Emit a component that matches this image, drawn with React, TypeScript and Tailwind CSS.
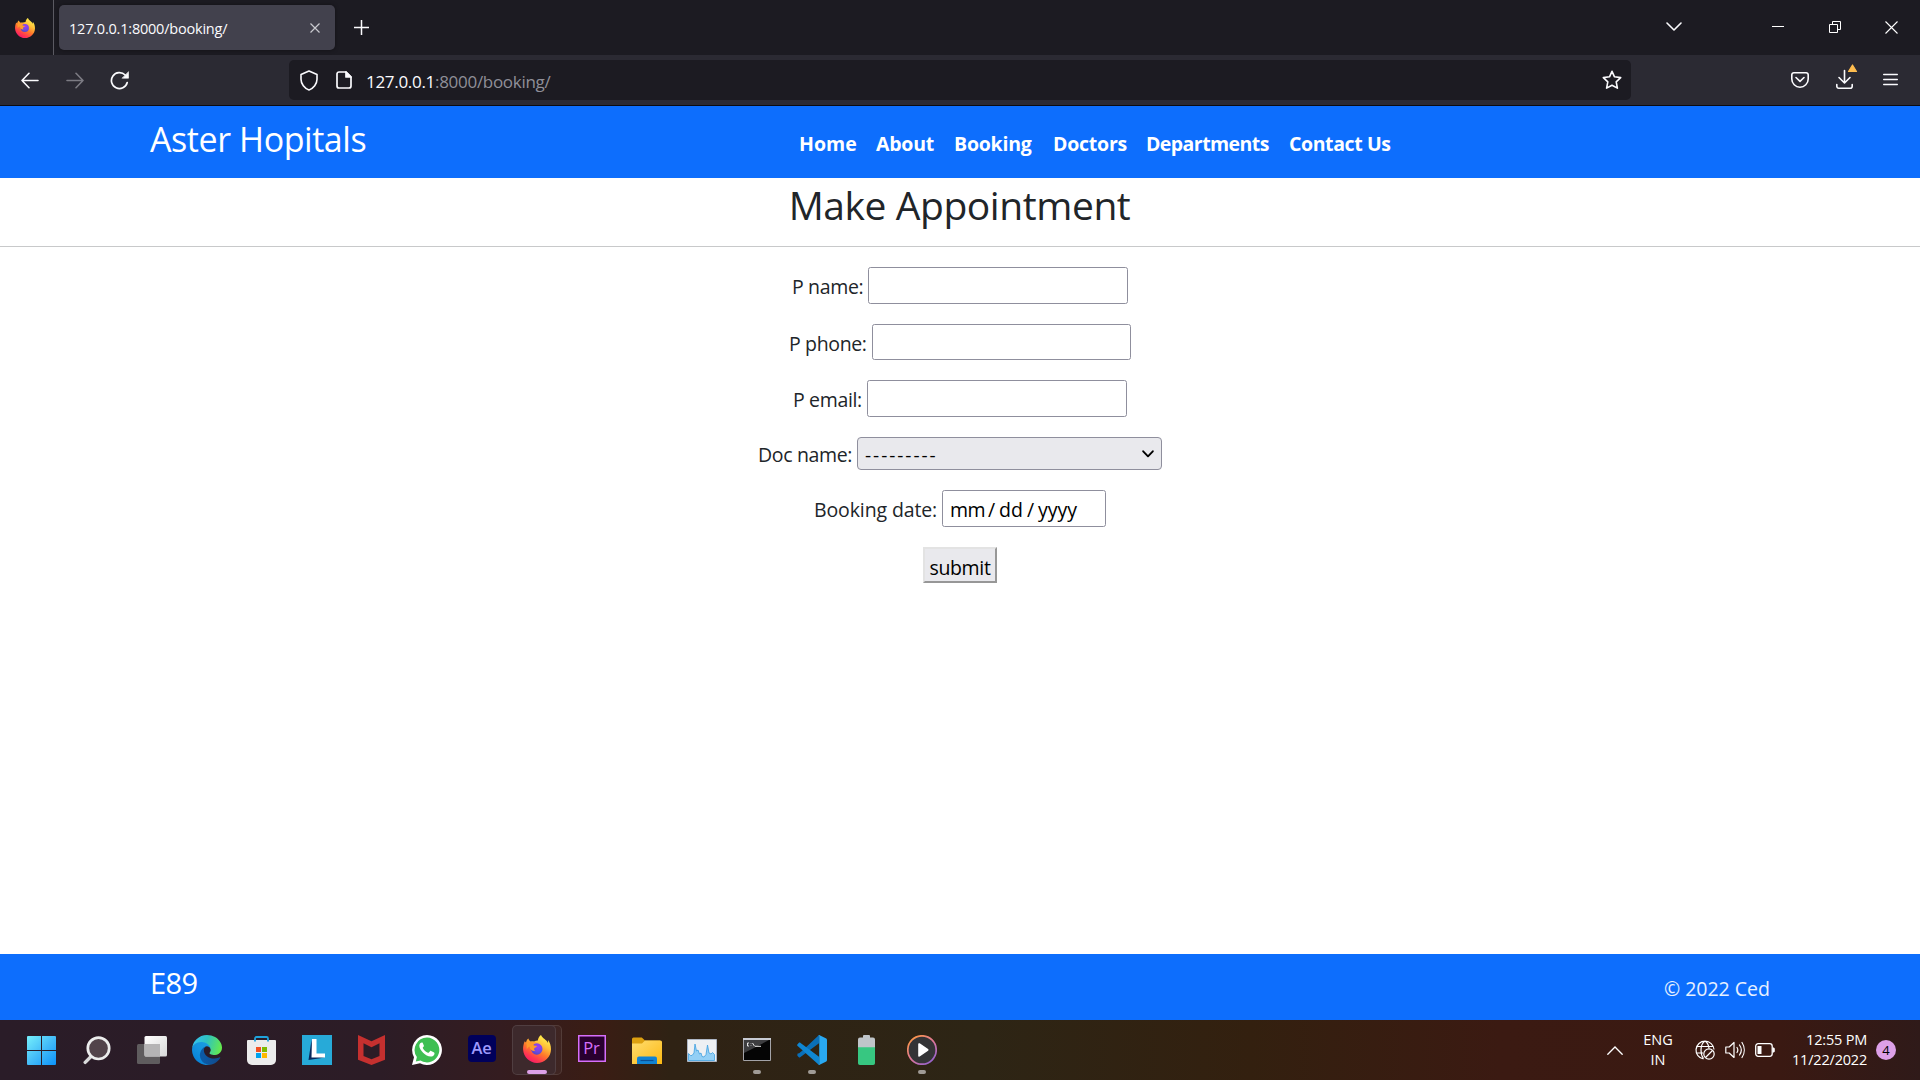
import type { ReactNode } from 'react';

function FirefoxLogo({ size, id }: { size: number; id: string }) {
  return (
    <svg width={size} height={size} viewBox="0 0 28 28">
      <defs>
        <linearGradient id={`${id}-body`} x1="0.8" y1="0.05" x2="0.25" y2="1">
          <stop offset="0" stopColor="#fff44f" />
          <stop offset="0.3" stopColor="#ffc038" />
          <stop offset="0.55" stopColor="#ff7a2a" />
          <stop offset="0.8" stopColor="#ff3750" />
          <stop offset="1" stopColor="#f5156c" />
        </linearGradient>
        <radialGradient id={`${id}-globe`} cx="0.6" cy="0.3" r="0.8">
          <stop offset="0" stopColor="#a23cf5" />
          <stop offset="0.6" stopColor="#6a4be0" />
          <stop offset="1" stopColor="#4a46b8" />
        </radialGradient>
      </defs>
      <path
        fill={`url(#${id}-body)`}
        d="M18 0c-1.8 1.300-3 3.400-3.200 5.600-1.300 0-2.600.3-3.800.8-1-.3-2.200-.4-3.300.1C6.600 5.800 5.700 4.800 5.400 3.500 4.100 4.500 3.200 6 3 7.600L1.700 6.200C.5 8.900 0 12 .1 14.600.5 22 6.500 28 14 28s14-6 14-13.800c0-3.600-1.200-7-3.100-9.100.2 1 .2 2 .1 2.900C23.600 4.500 19.500 3.600 18 0z"
      />
      <circle cx="13.8" cy="14" r="5.700" fill={`url(#${id}-globe)`} />
      <path
        fill="#ff9a2c"
        d="M3.500 7.800c2-1.400 4.600-1.200 6.100-.2 1.300-.4 2.600-.4 3.300-.1-1.700.9-2.400 1.900-2.600 2.600.7.9 3 .7 3.700 1-.1 1-1.900 1.700-2.700 2.200-.3.9-.1 1.900.8 2.700-2.900.4-5.200-1.600-5.500-4.600-1.500.5-2.700 2-2.800 3.500z"
      />
    </svg>
  );
}

function EdgeLogo() {
  return (
    <svg width="30" height="30" viewBox="0 0 256 256">
      <defs>
        <linearGradient id="edge-dark" x1="0.2" y1="0.5" x2="1" y2="0.5">
          <stop offset="0" stopColor="#0c59a4" />
          <stop offset="1" stopColor="#114a8b" />
        </linearGradient>
        <linearGradient id="edge-blue" x1="0.9" y1="0.1" x2="0.3" y2="1">
          <stop offset="0" stopColor="#1b9de2" />
          <stop offset="0.4" stopColor="#1595df" />
          <stop offset="1" stopColor="#0680d7" />
        </linearGradient>
        <linearGradient id="edge-green" x1="0" y1="0.4" x2="1" y2="0.6">
          <stop offset="0" stopColor="#35c1f1" />
          <stop offset="0.45" stopColor="#2fc2c0" />
          <stop offset="1" stopColor="#66eb4a" />
        </linearGradient>
      </defs>
      <path fill="url(#edge-dark)" d="M235.680 190.380a93.730 93.730 0 0 1-10.540 4.710 101.870 101.870 0 0 1-35.900 6.460c-47.320 0-88.540-32.550-88.540-74.320A31.480 31.480 0 0 1 117.130 100c-42.800 1.800-53.800 46.400-53.800 72.530 0 73.880 68.090 81.370 82.760 81.370 7.910 0 19.840-2.300 27-4.560l1.310-.44a128.340 128.340 0 0 0 66.600-52.800 4 4 0 0 0-5.320-5.720z" />
      <path fill="url(#edge-blue)" d="M105.730 241.420A79.200 79.200 0 0 1 83 220.100a80.720 80.720 0 0 1 29.530-120c3.120-1.470 8.450-4.130 15.540-4a32.350 32.350 0 0 1 25.690 13 31.880 31.880 0 0 1 6.360 18.660c0-.21 24.460-79.600-80-79.600-43.900 0-80 41.660-80 78.210a130.150 130.150 0 0 0 12.110 56 128 128 0 0 0 156.380 67.110 75.550 75.550 0 0 1-62.780-8z" />
      <path fill="url(#edge-green)" d="M152.330 148.860c-.81 1.050-3.300 2.500-3.300 5.660 0 2.610 1.700 5.120 4.720 7.230 14.380 10 41.490 8.680 41.560 8.680a59.560 59.560 0 0 0 30.270-8.350A61.380 61.380 0 0 0 256 109.040c.26-22.410-8-37.310-11.340-43.910C223.460 23.650 177.700 0 128 0A128 128 0 0 0 0 126.200c.48-36.540 36.800-66.050 80-66.050 3.500 0 23.460.34 42 10.070 16.340 8.580 24.900 18.940 30.850 29.210 6.180 10.670 7.280 24.150 7.280 29.520s-2.740 13.330-7.800 19.910z" />
    </svg>
  );
}

function WindowsLogo() {
  return (
    <svg width="29" height="29" viewBox="0 0 29 29">
      <defs>
        <linearGradient id="win" x1="0" y1="0" x2="29" y2="29" gradientUnits="userSpaceOnUse">
          <stop offset="0" stopColor="#76f0fb" />
          <stop offset="0.5" stopColor="#45bdf8" />
          <stop offset="1" stopColor="#0c92fb" />
        </linearGradient>
      </defs>
      <path fill="url(#win)" d="M1 0h13v14H0V1a1 1 0 0 1 1-1zM15 0h13a1 1 0 0 1 1 1v13H15zM0 15h14v14H1a1 1 0 0 1-1-1zM15 15h14v13a1 1 0 0 1-1 1H15z" />
    </svg>
  );
}

function SearchLogo() {
  return (
    <svg width="28" height="29" viewBox="0 0 28 29">
      <path d="M8.800 19.800 2.200 26.400" stroke="#d9dadb" strokeWidth="3.400" strokeLinecap="round" />
      <circle cx="15.500" cy="12.300" r="10.700" fill="#52444b" stroke="#eceded" strokeWidth="2.700" />
    </svg>
  );
}

function TaskViewLogo() {
  return (
    <svg width="30" height="28" viewBox="0 0 30 28">
      <defs>
        <linearGradient id="tv" x1="0" y1="0" x2="1" y2="1">
          <stop offset="0" stopColor="#ffffff" />
          <stop offset="1" stopColor="#d8d8d8" />
        </linearGradient>
      </defs>
      <rect x="0" y="8" width="23" height="20" rx="1.500" fill="#5f5c5e" />
      <rect x="7.500" y="0" width="22.500" height="20.500" rx="1.500" fill="url(#tv)" />
      <path d="M7.500 8H23v12.500H9a1.500 1.500 0 0 1-1.500-1.500z" fill="#b5b4b5" />
    </svg>
  );
}

function StoreLogo() {
  return (
    <svg width="29" height="30" viewBox="0 0 29 30">
      <path d="M0 6a1 1 0 0 1 1-1h27a1 1 0 0 1 1 1v19a5 5 0 0 1-5 5H5a5 5 0 0 1-5-5z" fill="#ececec" />
      <path d="M8 6.500V3.500A1.500 1.500 0 0 1 9.500 2h10A1.500 1.500 0 0 1 21 3.500v3" fill="none" stroke="#1fa3dc" strokeWidth="1.800" />
      <path d="M9 12h5v5H9z" fill="#f25022" />
      <path d="M15 12h5v5h-5z" fill="#7fba00" />
      <path d="M9 18h5v5H9z" fill="#00a4ef" />
      <path d="M15 18h5v5h-5z" fill="#ffb900" />
    </svg>
  );
}

function LensLogo() {
  return (
    <svg width="30" height="30" viewBox="0 0 30 30">
      <path d="M0 0h30v30H0z" fill="#27aad8" />
      <path d="M9.500 5 6.500 25l16.500-2.500-12-1z" fill="#06285c" />
      <path d="M10 4h4.500v14.500h8.500v4H9.500z" fill="#fff" />
    </svg>
  );
}

function McAfeeLogo() {
  return (
    <svg width="27" height="30" viewBox="0 0 27 30">
      <path fill="#c5302f" d="M0 0l13.500 6.300L27 0v24.800L13.500 30 0 24.800zM5.500 8.300v12.700l8 3.300 8-3.300V8.300l-8 4z" fillRule="evenodd" />
    </svg>
  );
}

function WhatsAppLogo() {
  return (
    <svg width="30" height="30" viewBox="0 0 30 30">
      <path d="M15 0a15 15 0 1 1-7 28.300L0 30l2-7.700A15 15 0 0 1 15 0z" fill="#fff" />
      <path d="M15 2.600a12.400 12.400 0 1 1-6.500 23L3.800 26.500l1.100-4.400A12.400 12.400 0 0 1 15 2.600z" fill="#3ebf52" />
      <path
        d="M10.900 8.200c-.3-.7-.7-.7-1-.7-1 0-2.600 1.200-2.600 3.300 0 4.300 6.500 10.800 11.200 10.800 2.300 0 4-1.300 4-3.200 0-.5 0-.8-.4-1l-3-1.500c-.4-.2-.8-.1-1.100.3l-1.100 1.400c-.2.3-.6.3-1 .1-2-.8-3.900-2.500-5-4.500-.2-.4-.1-.6.100-.9.400-.4 1.100-1 .9-1.600z"
        fill="#fff"
      />
    </svg>
  );
}

function AfterEffectsLogo() {
  return (
    <div className="flex h-[27px] w-[28px] items-center justify-center rounded-[4px] bg-[#00005b] pb-px text-[16.500px] leading-none font-semibold tracking-[-0.3px] text-[#9f9bfd]">
      Ae
    </div>
  );
}

function PremiereLogo() {
  return (
    <div className="flex h-[27px] w-[28px] items-center justify-center border border-[#d66efb] bg-[#29002f] text-[16.500px] leading-none font-medium tracking-[-0.2px] text-[#d66efb] shadow-[inset_0_0_0_0.5px_#d66efb]">
      Pr
    </div>
  );
}

function FolderLogo() {
  return (
    <svg width="30" height="27" viewBox="0 0 30 27">
      <defs>
        <linearGradient id="fold" x1="0" y1="0" x2="1" y2="1">
          <stop offset="0" stopColor="#ffdd70" />
          <stop offset="1" stopColor="#fdb913" />
        </linearGradient>
      </defs>
      <path d="M0 2a1.500 1.500 0 0 1 1.500-1.500h8.300l3.200 3H28V9H0z" fill="#dda010" />
      <path d="M0 6.500h10l3-3h15.500A1.500 1.500 0 0 1 30 5v22H0z" fill="url(#fold)" />
      <path d="M5 27v-5.500a2 2 0 0 1 2-2h16a2 2 0 0 1 2 2V27z" fill="#1283d3" />
      <path d="M8.500 23.500h13" stroke="#0a4f96" strokeWidth="1.200" />
    </svg>
  );
}

function MonitorLogo() {
  return (
    <svg width="30" height="23" viewBox="0 0 30 23">
      <path d="M.5.500h29v22H.5z" fill="#eef0f3" stroke="#aeb6c4" />
      <path
        d="M1.500 21.500v-7l2 2 1.500 0 2-2.500 1-9 1.500 7 1.500-1 1.500 4 1.500-1 1 3.500 2 .5 2-2.500 1.500-9.500 1.500 8 2 1 1.500-1.500 2 2v6z"
        fill="#93cff5"
        stroke="#3f9fdf"
        strokeWidth="0.800"
      />
    </svg>
  );
}

function TerminalLogo() {
  return (
    <svg width="28" height="23" viewBox="0 0 28 23">
      <path d="M.5.500h27v22H.5z" fill="#050505" stroke="#a3a3a8" />
      <path d="M0 0h28v2H0z" fill="#c8cbd4" />
      <path d="M1 2h25L9 11 1 15z" fill="#3d3d3f" />
      <path d="M6 5H4.500v3H6M8 5.500v.5M8 7.500V8M9.500 5l2 3.200M12 8.300h6" fill="none" stroke="#e6e6e6" />
    </svg>
  );
}

function CodeLogo() {
  return (
    <svg width="30" height="30" viewBox="0 0 30 30">
      <path d="M22 0 5.500 15.500 1.800 18.600a1 1 0 0 0-1.300.1L.3 20.500l1.500 1.800c.5.400 1 .3 1.400 0L22 8.200z" fill="#0a6fb8" />
      <path d="M22 30 .4 10.800a1 1 0 0 1 0-1.400l1.500-1.600c.4-.4 1-.3 1.400 0L22 21.800z" fill="#0f86d2" />
      <path d="M21 29.600c.4.400 1 .5 1.600.2l6.200-3c.7-.3 1.200-1 1.200-1.700V4.900c0-.7-.5-1.400-1.200-1.700l-6.200-3C22 0 21.400 0 21 .5c.7-.4 1.200.1 1.200 1v27c0 .9-.5 1.500-1.200 1.100z" fill="#29a9f2" />
    </svg>
  );
}

function BatteryAppLogo() {
  return (
    <svg width="17" height="30" viewBox="0 0 17 30">
      <path d="M5 1a1 1 0 0 1 1-1h5a1 1 0 0 1 1 1v1.500h3A2 2 0 0 1 17 4.500V13H0V4.500a2 2 0 0 1 2-2h3z" fill="#bfc5c9" />
      <path d="M0 12.200h17v16a1.800 1.800 0 0 1-1.800 1.800H1.800A1.800 1.800 0 0 1 0 28.200z" fill="#37c781" />
    </svg>
  );
}

function MediaLogo() {
  return (
    <svg width="30" height="30" viewBox="0 0 30 30">
      <defs>
        <linearGradient id="ring" x1="0.1" y1="0" x2="0.9" y2="1">
          <stop offset="0" stopColor="#ff9a3c" />
          <stop offset="0.5" stopColor="#e0789a" />
          <stop offset="1" stopColor="#8a5fd6" />
        </linearGradient>
      </defs>
      <circle cx="15" cy="15" r="14.200" fill="#343436" stroke="url(#ring)" strokeWidth="1.700" />
      <path d="M11.200 9.200c0-.8.8-1.300 1.500-.9l8.400 5.800c.6.400.6 1.300 0 1.700l-8.400 5.800c-.7.400-1.500-.1-1.500-.9z" fill="#fff" />
    </svg>
  );
}

type TaskItem = { key: string; icon: ReactNode; running?: boolean; active?: boolean };

const taskItems: TaskItem[] = [
  { key: 'start', icon: <WindowsLogo /> },
  { key: 'search', icon: <SearchLogo /> },
  { key: 'views', icon: <TaskViewLogo /> },
  { key: 'edge', icon: <EdgeLogo /> },
  { key: 'store', icon: <StoreLogo /> },
  { key: 'lens', icon: <LensLogo /> },
  { key: 'mcafee', icon: <McAfeeLogo /> },
  { key: 'whatsapp', icon: <WhatsAppLogo /> },
  { key: 'ae', icon: <div className="-mt-[3px]"><AfterEffectsLogo /></div> },
  { key: 'firefox', icon: <div className="-mt-[2px]"><FirefoxLogo size={28} id="ff-task" /></div>, active: true },
  { key: 'pr', icon: <div className="-mt-[3px]"><PremiereLogo /></div> },
  { key: 'files', icon: <FolderLogo /> },
  { key: 'monitor', icon: <MonitorLogo /> },
  { key: 'terminal', icon: <div className="-mt-px"><TerminalLogo /></div>, running: true },
  { key: 'code', icon: <CodeLogo />, running: true },
  { key: 'battery', icon: <BatteryAppLogo /> },
  { key: 'media', icon: <MediaLogo />, running: true },
];

function TabStrip() {
  return (
    <div className="flex h-[55px] bg-[#1c1b22] text-[#fbfbfe]">
      <div className="flex w-[54px] items-center border-r border-[#5b5a62] pl-[15px]">
        <FirefoxLogo size={20} id="ff-tab" />
      </div>
      <div className="mt-[5px] ml-[5px] flex h-[45px] w-[276px] items-center justify-between rounded-[5px] bg-[#42414d] pr-[15px] pl-[10px] shadow-[0_0_4px_rgba(0,0,0,0.4)]">
        <span className="pt-[3px] text-[14.500px] leading-[20px] tracking-[-0.210px] whitespace-nowrap">127.0.0.1:8000/booking/</span>
        <svg width="10" height="10" viewBox="0 0 10 10" stroke="#c9c9cf" strokeWidth="1.200"><path d="M.5.500l9 9M9.500.5l-9 9" /></svg>
      </div>
      <svg className="mt-[20px] ml-[19px]" width="15" height="15" viewBox="0 0 15 15" stroke="#fbfbfe" strokeWidth="1.500"><path d="M7.500 0v15M0 7.500h15" /></svg>
      <div className="ml-auto flex">
        <svg className="mt-[22px] mr-[90px]" width="16" height="10" viewBox="0 0 16 10" fill="none" stroke="#fbfbfe" strokeWidth="1.600" strokeLinecap="round" strokeLinejoin="round"><path d="M1 1l7 7 7-7" /></svg>
        <svg className="mt-[26px] mr-[45px]" width="12" height="1" viewBox="0 0 12 1"><path d="M0 0h12v1H0z" fill="#fff" /></svg>
        <svg className="mt-[21px] mr-[44px]" width="12" height="12" viewBox="0 0 12 12" fill="none" stroke="#fff"><path d="M.5 3.500h8v8h-8zM3.500 3.500v-3h8v8h-3" /></svg>
        <svg className="mt-[21px] mr-[22px]" width="13" height="13" viewBox="0 0 13 13" stroke="#fff" strokeWidth="1.100"><path d="M.5.500l12 12M12.500.5l-12 12" /></svg>
      </div>
    </div>
  );
}

function Toolbar() {
  return (
    <div className="flex h-[51px] items-start border-b border-[#0c0c12] bg-[#2b2a33]">
      <svg className="mt-[17px] ml-[21px]" width="18" height="17" viewBox="0 0 18 17" fill="none" stroke="#fbfbfe" strokeWidth="1.600" strokeLinecap="round" strokeLinejoin="round"><path d="M17 8.500H1M8 1.300 1 8.500l7 7.200" /></svg>
      <svg className="mt-[17px] ml-[27px]" width="18" height="17" viewBox="0 0 18 17" fill="none" stroke="#7c7b83" strokeWidth="1.600" strokeLinecap="round" strokeLinejoin="round"><path d="M1 8.500h16M10 1.300l7 7.200-7 7.200" /></svg>
      <svg className="mt-[16px] ml-[26px]" width="20" height="19" viewBox="0 0 20 19" fill="none" stroke="#fbfbfe" strokeWidth="1.700" strokeLinecap="round"><path d="M17.200 11.500A8 8 0 1 1 15.200 4" /><path d="M18.500 1v6.200h-6.200z" fill="#fbfbfe" strokeWidth="0.600" /></svg>
      <div className="mt-[5px] ml-[159px] flex h-[40px] w-[1342px] items-center rounded-[5px] bg-[#1c1b22] pr-[9px] pl-[11px]">
        <svg width="18" height="21" viewBox="0 0 18 21" fill="none" stroke="#fbfbfe" strokeWidth="1.600" strokeLinejoin="round"><path d="M9 1 17 4.500v4.800c0 4.500-3.500 9.300-8 10.700C4.500 18.600 1 13.800 1 9.300V4.500z" /></svg>
        <svg className="ml-[18px]" width="16" height="18" viewBox="0 0 16 18" fill="none" stroke="#fbfbfe" strokeWidth="1.700" strokeLinejoin="round"><path d="M3 1h7l5 5v9a2 2 0 0 1-2 2H3a2 2 0 0 1-2-2V3a2 2 0 0 1 2-2z" /><path d="M10 1v5h5z" fill="#fbfbfe" /></svg>
        <span className="ml-[14px] pt-[3px] text-[17px] leading-[24px] tracking-[-0.300px] whitespace-nowrap text-[#8f8f98]"><span className="text-[#fbfbfe]">127.0.0.1</span>:8000/booking/</span>
        <svg className="ml-auto" width="20" height="20" viewBox="0 0 20 20" fill="none" stroke="#fbfbfe" strokeWidth="1.600" strokeLinejoin="round"><path d="M10 1.300l2.500 5.500 6.200.8-4.500 4.200 1.200 6.300L10 15.200l-5.400 2.900 1.200-6.300L1.300 7.600l6.200-.8z" /></svg>
      </div>
      <div className="ml-auto flex items-start pr-[22px]">
        <svg className="mt-[17px] mr-[27px]" width="18" height="16" viewBox="0 0 18 16" fill="none" stroke="#fbfbfe" strokeWidth="1.600" strokeLinecap="round" strokeLinejoin="round"><path d="M2.800.8h12.400a2 2 0 0 1 2 2V7a8.200 8.200 0 0 1-16.400 0V2.800a2 2 0 0 1 2-2z" /><path d="M5 5.500l4 3.800 4-3.800" /></svg>
        <svg className="mt-[9px] mr-[25px]" width="22" height="26" viewBox="0 0 22 26" fill="none" stroke="#fbfbfe" strokeWidth="1.600" strokeLinecap="round" strokeLinejoin="round"><path d="M8.500 6.500v12M3 13.500l5.500 5.500L14 13.500M.8 20.500v1.700a2 2 0 0 0 2 2h11.400a2 2 0 0 0 2-2v-1.700" /><path d="M16.500 1l4 6.500h-8z" fill="#ffbd4f" stroke="#ffbd4f" strokeWidth="1.200" /></svg>
        <svg className="mt-[18px]" width="15" height="13" viewBox="0 0 15 13" stroke="#fbfbfe" strokeWidth="1.400" strokeLinecap="round"><path d="M.7 1.500h13.600M.7 6.500h13.600M.7 11.500h13.600" /></svg>
      </div>
    </div>
  );
}

function SiteHeader() {
  return (
    <header className="flex h-[72px] bg-[#0d6efd] pl-[150px] text-white">
      <div className="w-[649px] pt-[8px] text-[34px] leading-[50px] tracking-[-0.440px]">Aster Hopitals</div>
      <nav className="flex pt-[23px] text-[19.500px] leading-[30px] font-bold tracking-[-0.220px] whitespace-nowrap">
        <a className="w-[77px] tracking-normal">Home</a>
        <a className="w-[78px]">About</a>
        <a className="w-[99px]">Booking</a>
        <a className="w-[93px]">Doctors</a>
        <a className="w-[143px] tracking-[-0.560px]">Departments</a>
        <a className="tracking-[-0.400px]">Contact Us</a>
      </nav>
    </header>
  );
}

function BookingForm() {
  const input = 'rounded-[2.500px] border border-[#8f8f9d] bg-white';
  return (
    <form className="flex flex-col items-center gap-5 pt-5 text-[19.500px] leading-[30px] tracking-[-0.350px] text-[#212529]">
      <div className="flex h-[37px]">
        <label className="w-[76px] pt-[5px]">P name:</label>
        <input className={`${input} h-[37px] w-[260px]`} />
      </div>
      <div className="flex h-[36px]">
        <label className="w-[83px] pt-[5px]">P phone:</label>
        <input className={`${input} h-[36px] w-[259px]`} />
      </div>
      <div className="flex h-[37px]">
        <label className="w-[74px] pt-[5px]">P email:</label>
        <input className={`${input} h-[37px] w-[260px]`} />
      </div>
      <div className="flex h-[33px]">
        <label className="w-[99px] pt-[3px]">Doc name:</label>
        <div className="flex h-[33px] w-[305px] items-center justify-between rounded-[4px] border border-[#8f8f9d] bg-[#e9e9ed] pr-[7px] pl-[7px] text-black">
          <span className="pt-[3px] text-[19px] tracking-[1.950px]">---------</span>
          <svg width="12" height="8" viewBox="0 0 12 8" fill="none" stroke="#000" strokeWidth="1.900" strokeLinecap="round" strokeLinejoin="round"><path d="M1.200 1.300 6 6.300l4.800-5" /></svg>
        </div>
      </div>
      <div className="flex h-[37px]">
        <label className="w-[128px] pt-[5px] tracking-[-0.120px]">Booking date:</label>
        <div className={`${input} flex h-[37px] w-[164px] pt-[4px] pl-[7px] tracking-normal text-black`}>
          <span className="w-[38px] tracking-[-0.600px]">mm</span>
          <span className="w-[11px]">/</span>
          <span className="w-[28px]">dd</span>
          <span className="w-[11px]">/</span>
          <span>yyyy</span>
        </div>
      </div>
      <button type="button" className="h-[36px] w-[74px] border-2 border-t-[#e3e3e3] border-r-[#979797] border-b-[#979797] border-l-[#e3e3e3] bg-[#e9e9ed] pt-[4px] text-black">submit</button>
    </form>
  );
}

function Taskbar() {
  return (
    <div className="flex h-[60px] bg-[linear-gradient(90deg,#2a1c28_0px,#2c1c26_380px,#341c20_500px,#3a1d14_600px,#2f2214_670px,#2d2515_980px,#33200f_1250px,#3b1a12_1500px,#3a1912_1780px,#2f1a19_1920px)] pl-[14px] text-white">
      {taskItems.map((item) => (
        <div key={item.key} className="relative flex w-[55px] items-center justify-center">
          {item.active && (
            <>
              <div className="absolute top-[5px] left-[9px] h-[50px] w-[44px] rounded-[5px] border border-white/10 bg-white/[0.04]" />
              <div className="absolute top-[5px] left-[3px] h-[50px] w-[44px] rounded-[5px] border border-white/10 bg-[#3d292c]" />
              <div className="absolute top-[50px] left-[18px] h-[4px] w-[20px] rounded-full bg-[#dda0e8]" />
            </>
          )}
          {item.running && <div className="absolute top-[50px] left-[24px] h-[4px] w-[8px] rounded-full bg-[#a09b96]" />}
          <div className="relative">{item.icon}</div>
        </div>
      ))}
      <div className="ml-auto flex items-center pr-[24px]">
        <svg width="16" height="9" viewBox="0 0 16 9" fill="none" stroke="#fff" strokeWidth="1.300" strokeLinecap="round"><path d="M.8 8.200 8 1l7.200 7.200" /></svg>
        <div className="ml-[19px] w-[32px] text-center text-[14.500px] leading-[20px]">ENG<br />IN</div>
        <svg className="ml-[21px]" width="20" height="20" viewBox="0 0 20 20" fill="none" stroke="#fff" strokeWidth="1.200">
          <path d="M8.500 19A9 9 0 1 1 19 9.500M1.500 6.500h17M1.500 13h6.500M8.500 18.500C6.500 16 6 13 6 10s1-7 4-9c3 2 3.800 5 4 7.500" />
          <circle cx="14" cy="14" r="5.200" />
          <path d="M10.500 17.500l7-7" />
        </svg>
        <svg className="ml-[10px]" width="20" height="18" viewBox="0 0 20 18" fill="none" stroke="#fff" strokeWidth="1.200" strokeLinecap="round" strokeLinejoin="round">
          <path d="M.8 6h3.400L9 1.500v15L4.200 12H.8zM12 6.500c1 1.500 1 3.500 0 5M14.500 4c2.200 3 2.200 7 0 10M17 1.500c3 4.500 3 10.500 0 15" />
        </svg>
        <svg className="ml-[10px]" width="20" height="14" viewBox="0 0 20 14" fill="none" stroke="#fff" strokeWidth="1.300">
          <rect x="0.700" y="0.700" width="16.500" height="12.600" rx="2.500" />
          <path d="M2.500 3h4v8h-4z" fill="#fff" stroke="none" />
          <path d="M17.500 4.500h1.300l1 1v3l-1 1h-1.300z" fill="#fff" stroke="none" />
        </svg>
        <div className="w-[92px] text-right text-[14.500px] leading-[20px] tracking-[-0.200px]">12:55 PM<br />11/22/2022</div>
        <div className="ml-[9px] flex h-[20px] w-[20px] items-center justify-center rounded-full bg-[#dda0e8] pt-px text-[13px] leading-none text-black">4</div>
      </div>
    </div>
  );
}

export default function App() {
  return (
    <div className="flex h-[1080px] w-[1920px] flex-col overflow-hidden bg-white font-['Open_Sans','Noto_Sans',sans-serif]">
      <TabStrip />
      <Toolbar />
      <SiteHeader />
      <main className="grow">
        <h1 className="h-[68px] pr-px text-center text-[39px] leading-[53px] tracking-[-0.430px] text-[#212529]">Make Appointment</h1>
        <hr className="border-t border-[#c8c9ca]" />
        <BookingForm />
      </main>
      <footer className="flex h-[66px] justify-between bg-[#0d6efd] pr-[150px] pl-[150px] text-white">
        <div className="pt-[9px] text-[29px] leading-[40px] tracking-[-0.600px]">E89</div>
        <div className="pt-[20px] text-[19.500px] leading-[30px] text-white/90">© 2022 Ced</div>
      </footer>
      <Taskbar />
    </div>
  );
}
